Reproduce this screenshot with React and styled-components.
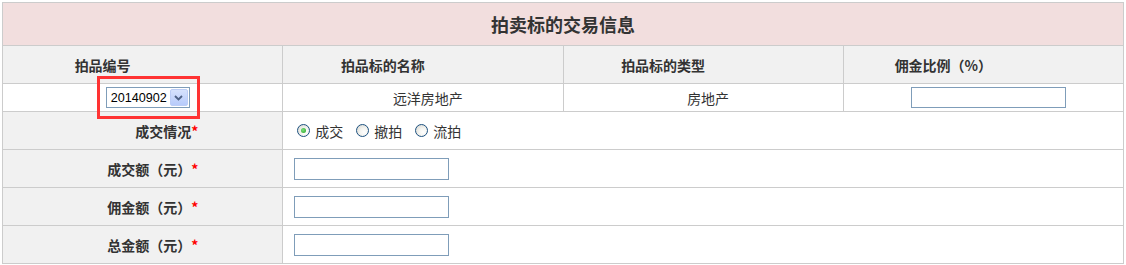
import { Fragment } from "react";
import styled, { createGlobalStyle } from "styled-components";

const GlobalStyle = createGlobalStyle`
  body {
    margin: 0;
    padding: 0;
    background: #fff;
    font-family: "Noto Sans CJK SC", "Liberation Sans", sans-serif;
  }
`;

const Page = styled.div`
  padding: 2px;
`;

const Table = styled.div`
  display: grid;
  grid-template-columns: repeat(4, 1fr);
  grid-template-rows: 43px 38px 28px repeat(4, 38px);
  width: 1122px;
  box-sizing: border-box;
  border-left: 1px solid #cccccc;
  border-top: 1px solid #cccccc;
  color: #333;
  font-size: 14px;
`;

const Cell = styled.div`
  grid-column: span ${(p) => p.$span || 1};
  display: flex;
  align-items: center;
  box-sizing: border-box;
  border-right: 1px solid #cccccc;
  border-bottom: 1px solid #cccccc;
  white-space: nowrap;
`;

const TitleCell = styled(Cell)`
  justify-content: center;
  background: #f2dede;
  font-size: 18px;
  font-weight: bold;
`;

const HeadCell = styled(Cell)`
  justify-content: center;
  padding-right: 80px;
  background: #f1f1f1;
  font-weight: bold;
`;

const DataCell = styled(Cell)`
  justify-content: center;
  padding-left: 10px;
  background: #fff;
`;

const LabelCell = styled(Cell)`
  justify-content: flex-end;
  padding-right: 84px;
  background: #f1f1f1;
  font-weight: bold;
`;

const ValueCell = styled(Cell)`
  justify-content: flex-start;
  padding-left: 11px;
  background: #fff;
`;

const Required = styled.span`
  color: #ff0000;
  font-weight: bold;
`;

const TextInput = styled.input`
  width: 155px;
  height: ${(p) => p.$h || 22}px;
  box-sizing: border-box;
  margin: 0;
  padding: 0 3px;
  border: 1px solid #7f9db9;
  background: #fff;
  outline: none;
`;

const SelectBox = styled.div`
  position: relative;
  display: flex;
  align-items: center;
  width: 84px;
  height: 21px;
  box-sizing: border-box;
  padding-left: 4px;
  border: 1px solid #7f9db9;
  background: #fff;
  color: #000;
  font-family: "Liberation Sans", Arial, sans-serif;
  font-size: 12.6px;

  &::after {
    content: "";
    position: absolute;
    top: -12px;
    bottom: -12px;
    left: -10px;
    right: -11px;
    border: 3px solid #ff3333;
    pointer-events: none;
  }
`;

const SelectButton = styled.span`
  display: flex;
  align-items: center;
  justify-content: center;
  width: 18px;
  height: 17px;
  margin-left: auto;
  margin-right: 1px;
  box-sizing: border-box;
  border: 1px solid #bccdf6;
  border-radius: 2px;
  background: linear-gradient(#d6e2fd, #b7cbfb);
`;

const RadioGroup = styled.div`
  display: flex;
  align-items: center;
`;

const RadioItem = styled.label`
  display: flex;
  align-items: center;
  margin-right: 10px;
`;

const RadioDot = styled.span`
  position: relative;
  width: 13px;
  height: 13px;
  margin: 0 5px 0 3px;
  box-sizing: border-box;
  border: 1px solid #1c5180;
  border-radius: 50%;
  background: radial-gradient(circle at 65% 65%, #ffffff 0%, #f4f4f0 40%, #d2d2cc 100%);

  &::after {
    content: "";
    display: ${(p) => (p.$checked ? "block" : "none")};
    position: absolute;
    left: 3px;
    top: 3px;
    width: 5px;
    height: 5px;
    border-radius: 50%;
    background: radial-gradient(circle at 40% 40%, #7ee07e, #21a121);
  }
`;

function Chevron() {
  return (
    <svg width="9" height="6" viewBox="0 0 9 6">
      <path d="M1 1 L4.5 4.5 L8 1" fill="none" stroke="#4d6185" strokeWidth="1.8" />
    </svg>
  );
}

const rows = ["成交额（元）", "佣金额（元）", "总金额（元）"];

export default function App() {
  return (
    <>
      <GlobalStyle />
      <Page>
        <Table>
          <TitleCell $span={4}>拍卖标的交易信息</TitleCell>

          <HeadCell>拍品编号</HeadCell>
          <HeadCell>拍品标的名称</HeadCell>
          <HeadCell>拍品标的类型</HeadCell>
          <HeadCell>佣金比例（%）</HeadCell>

          <DataCell>
            <SelectBox>
              20140902
              <SelectButton>
                <Chevron />
              </SelectButton>
            </SelectBox>
          </DataCell>
          <DataCell>远洋房地产</DataCell>
          <DataCell>房地产</DataCell>
          <DataCell>
            <TextInput $h={21} />
          </DataCell>

          <LabelCell>
            成交情况<Required>*</Required>
          </LabelCell>
          <ValueCell $span={3}>
            <RadioGroup>
              <RadioItem>
                <RadioDot $checked />
                成交
              </RadioItem>
              <RadioItem>
                <RadioDot />
                撤拍
              </RadioItem>
              <RadioItem>
                <RadioDot />
                流拍
              </RadioItem>
            </RadioGroup>
          </ValueCell>

          {rows.map((label) => (
            <Fragment key={label}>
              <LabelCell>
                {label}
                <Required>*</Required>
              </LabelCell>
              <ValueCell $span={3}>
                <TextInput />
              </ValueCell>
            </Fragment>
          ))}
        </Table>
      </Page>
    </>
  );
}
